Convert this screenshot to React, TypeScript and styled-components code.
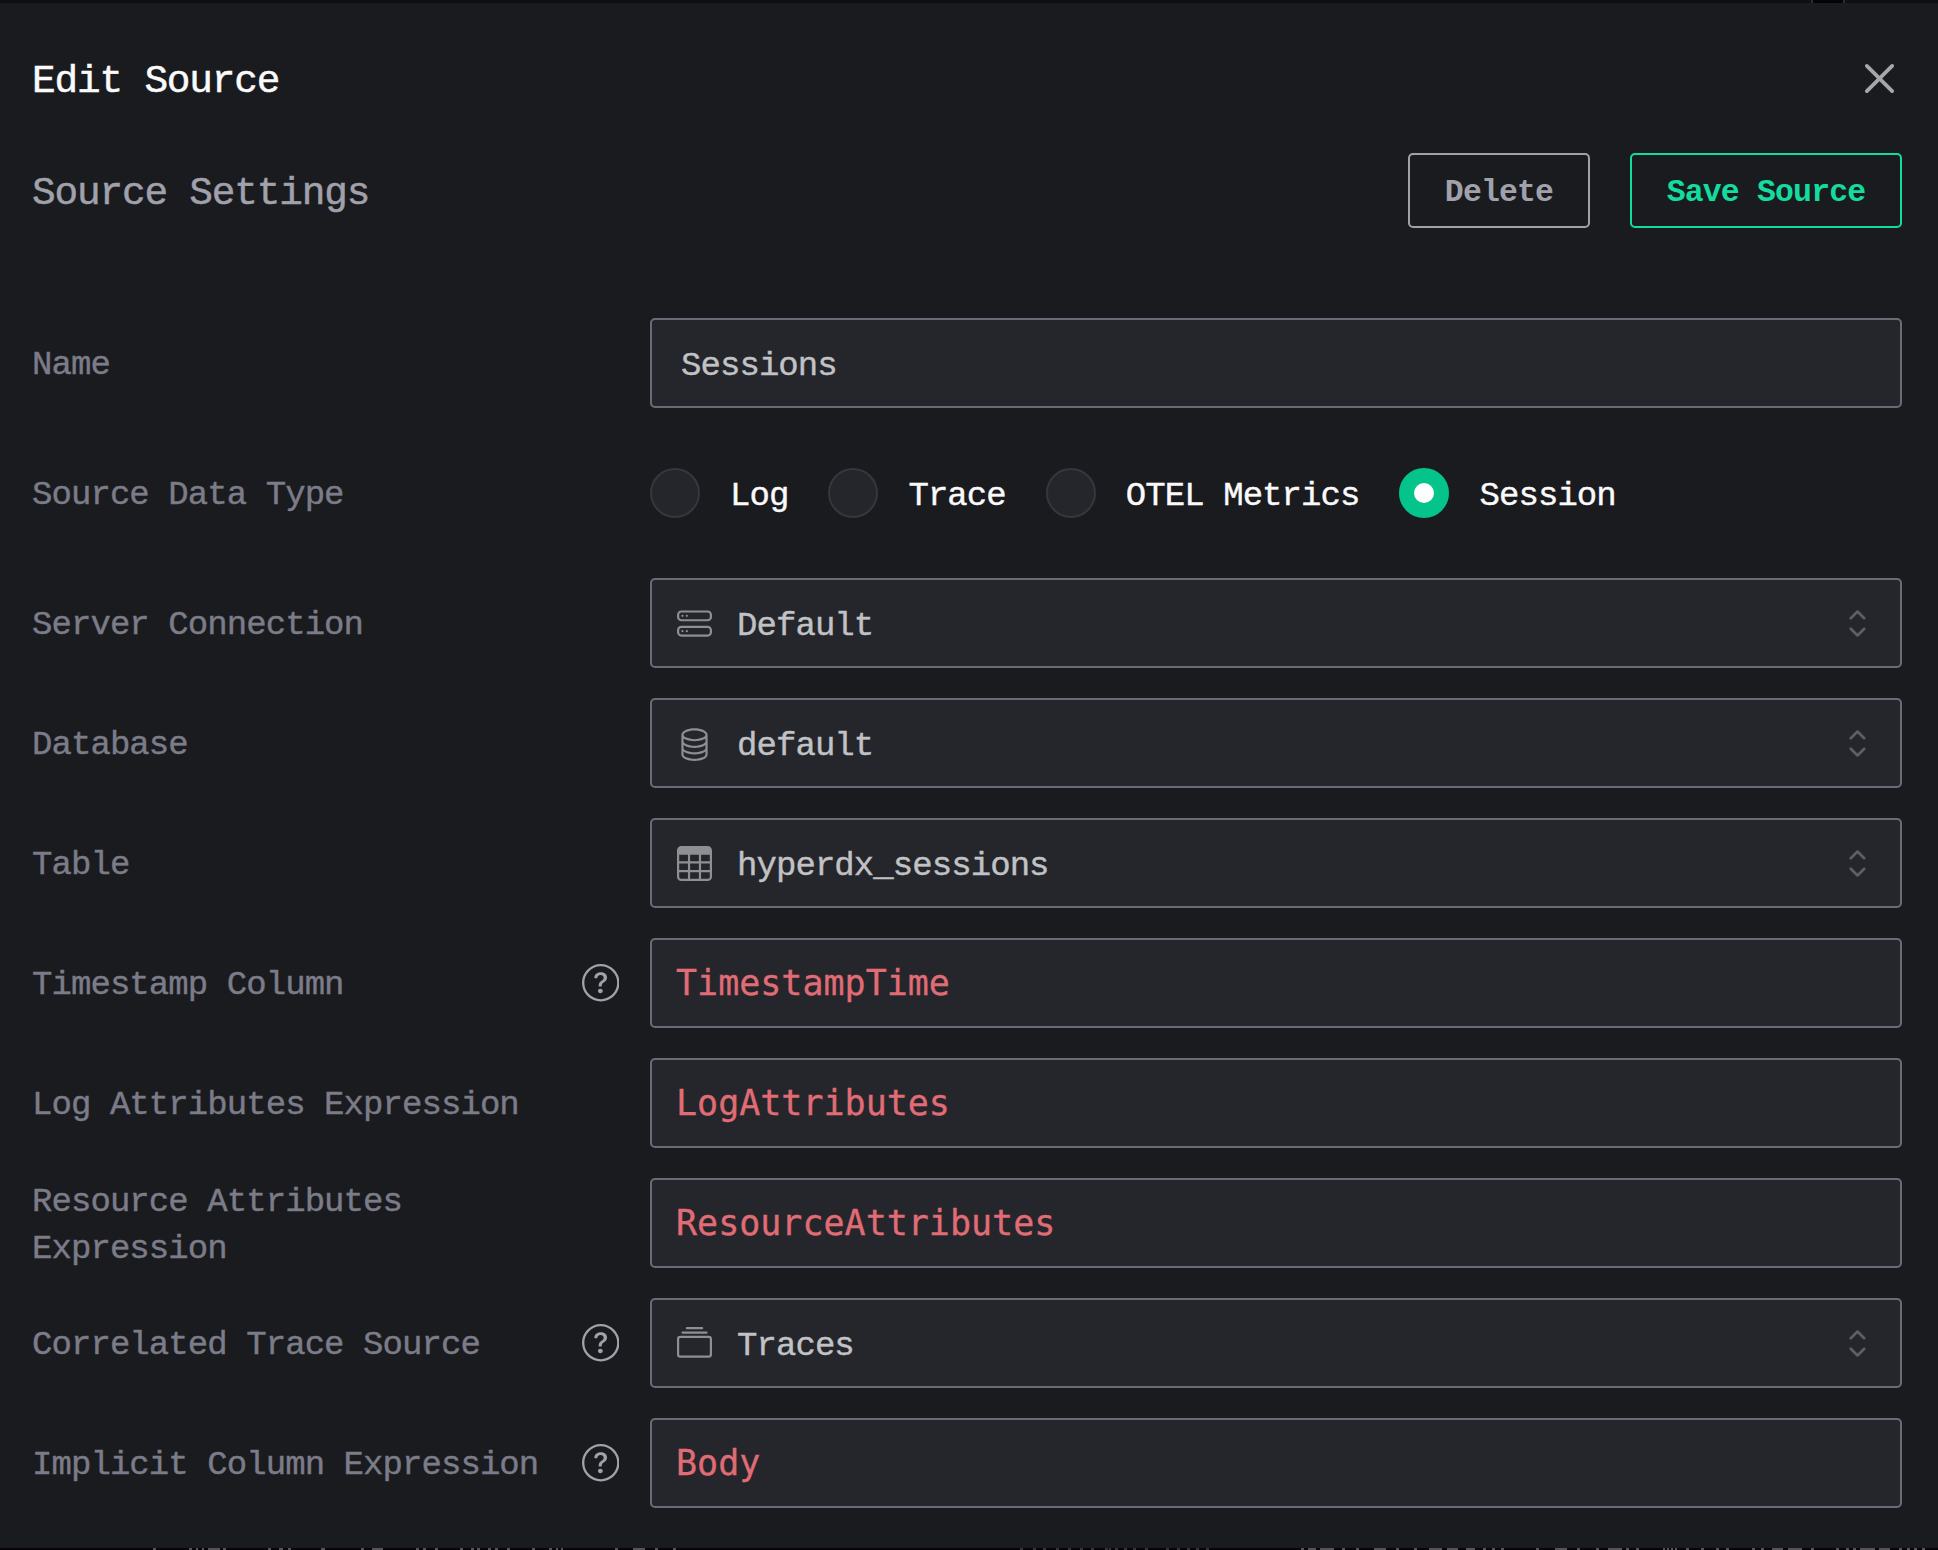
import React from 'react';
import styled, { createGlobalStyle } from 'styled-components';
import { BsHddStack, BsDatabase, BsTable, BsCollection, BsQuestionCircle } from 'react-icons/bs';

const GlobalStyle = createGlobalStyle`
  *, *::before, *::after { box-sizing: border-box; }
  body {
    margin: 0;
    background: #0f0f12;
    font-family: 'Liberation Mono', monospace;
    -webkit-font-smoothing: antialiased;
  }
  svg { display: block; flex: none; }
`;

const Page = styled.div`
  display: flex;
  flex-direction: column;
  height: 1550px;
  overflow: hidden;
`;

const TopStrip = styled.div`
  display: flex;
  justify-content: flex-end;
  flex: none;
  height: 3px;
  padding-right: 93px;
  background: #0f0f12;
`;

const TopNotch = styled.div`
  width: 34px;
  background: #040406;
  border: solid #2b2b30;
  border-width: 0 2px;
`;

const BottomStrip = styled.div`
  flex: none;
  height: 2px;
  background: #070508;
`;

const Modal = styled.main`
  flex: 1;
  min-height: 0;
  padding: 50px 36px 0 32px;
  background: #1a1b1f;
`;

const Bar = styled.header`
  display: flex;
  align-items: center;
  justify-content: space-between;
`;

const TitleBar = styled(Bar)`
  height: 51px;
`;

const SettingsBar = styled(Bar)`
  height: 75px;
  margin-top: 49px;
`;

const Heading = styled.h2<{ $muted?: boolean }>`
  margin: 0;
  padding-top: 6px;
  font-size: 39.4px;
  letter-spacing: -1.16px;
  font-weight: 400;
  line-height: 50px;
  color: ${p => (p.$muted ? '#a1a1ab' : '#fafafa')};
  -webkit-text-stroke: 0.5px currentColor;
`;

const CloseButton = styled.button`
  display: flex;
  margin-right: -2px;
  padding: 0;
  border: 0;
  background: none;
  color: #a6a6ab;
`;

const Actions = styled.div`
  display: flex;
  gap: 40px;
`;

const ActionButton = styled.button<{ $tone: string; $width: number }>`
  width: ${p => p.$width}px;
  height: 75px;
  padding: 5px 0 0;
  border: 2px solid ${p => p.$tone};
  border-radius: 5px;
  background: transparent;
  color: ${p => p.$tone};
  font: 700 31.5px/1 'Liberation Mono', monospace;
  letter-spacing: -0.85px;
`;

const Form = styled.div`
  display: flex;
  flex-direction: column;
  gap: 30px;
  margin-top: 90px;
`;

const Row = styled.div<{ $tall?: boolean }>`
  display: grid;
  grid-template-columns: 588px 1fr;
  grid-template-rows: 100%;
  column-gap: 30px;
  align-items: center;
  height: ${p => (p.$tall ? 110 : 90)}px;
`;

const LabelCell = styled.div`
  display: flex;
  align-items: center;
  justify-content: space-between;
  padding-right: 1px;
  color: #a1a1ab;
`;

const Label = styled.label`
  max-width: 550px;
  padding-top: 5px;
  font-size: 34px;
  letter-spacing: -0.93px;
  line-height: 47px;
  color: #7c7c89;
  -webkit-text-stroke: 0.4px currentColor;
`;

const Control = styled.div`
  display: flex;
  align-items: center;
  height: 90px;
  border: 2px solid #6b6b78;
  border-radius: 5px;
  background: #25262b;
  font-size: 34px;
  letter-spacing: -0.93px;
  color: #c1c2c5;
`;

const TextField = styled(Control)`
  padding: 5px 28px 0 29px;
  -webkit-text-stroke: 0.4px currentColor;
`;

const CodeField = styled(Control)`
  padding: 0 24px;
  font-family: 'DejaVu Sans Mono', monospace;
  font-size: 35px;
  letter-spacing: 0;
  color: #e06c75;
  -webkit-text-stroke: 0.3px currentColor;
`;

const SelectField = styled(Control)`
  padding: 0 20px 0 25px;
`;

const SelectIcon = styled.span`
  display: flex;
  margin-right: 25px;
  color: #8e8f92;
`;

const SelectValue = styled.span`
  flex: 1;
  padding-top: 5px;
  -webkit-text-stroke: 0.4px currentColor;
`;

const RadioGroup = styled.div`
  display: flex;
  align-items: center;
  gap: 40px;
`;

const RadioOption = styled.label`
  display: flex;
  align-items: center;
  gap: 30px;
  font-size: 34px;
  letter-spacing: -0.93px;
  color: #fafafa;
  -webkit-text-stroke: 0.4px currentColor;
`;

const RadioText = styled.span`
  padding-top: 5px;
`;

const RadioDot = styled.span<{ $on?: boolean }>`
  display: grid;
  place-items: center;
  width: 50px;
  height: 50px;
  border: 2px solid ${p => (p.$on ? '#05c48b' : '#36373e')};
  border-radius: 50%;
  background: ${p => (p.$on ? '#05c48b' : '#25262b')};

  &::after {
    content: '';
    width: 20px;
    height: 20px;
    border-radius: 50%;
    background: ${p => (p.$on ? '#fff' : 'transparent')};
  }
`;

const CloseIcon = () => (
  <svg width="49" height="49" viewBox="0 0 15 15" fill="currentColor">
    <path d="M11.7816 4.03157C12.0062 3.80702 12.0062 3.44295 11.7816 3.2184C11.5571 2.99385 11.193 2.99385 10.9685 3.2184L7.50005 6.68682L4.03164 3.2184C3.80708 2.99385 3.44301 2.99385 3.21846 3.2184C2.99391 3.44295 2.99391 3.80702 3.21846 4.03157L6.68688 7.49999L3.21846 10.9684C2.99391 11.193 2.99391 11.557 3.21846 11.7816C3.44301 12.0061 3.80708 12.0061 4.03164 11.7816L7.50005 8.31316L10.9685 11.7816C11.193 12.0061 11.5571 12.0061 11.7816 11.7816C12.0062 11.557 12.0062 11.193 11.7816 10.9684L8.31322 7.49999L11.7816 4.03157Z" />
  </svg>
);

const ChevronsIcon = () => (
  <svg width="45" height="45" viewBox="0 0 15 15" fill="#5c5f66">
    <path d="M4.93179 5.43179C4.75605 5.60753 4.75605 5.89245 4.93179 6.06819C5.10753 6.24392 5.39245 6.24392 5.56819 6.06819L7.49999 4.13638L9.43179 6.06819C9.60753 6.24392 9.89245 6.24392 10.0682 6.06819C10.2439 5.89245 10.2439 5.60753 10.0682 5.43179L7.81819 3.18179C7.73379 3.0974 7.61933 3.04999 7.49999 3.04999C7.38064 3.04999 7.26618 3.0974 7.18179 3.18179L4.93179 5.43179ZM10.0682 9.56819C10.2439 9.39245 10.2439 9.10753 10.0682 8.93179C9.89245 8.75606 9.60753 8.75606 9.43179 8.93179L7.49999 10.8636L5.56819 8.93179C5.39245 8.75606 5.10753 8.75606 4.93179 8.93179C4.75605 9.10753 4.75605 9.39245 4.93179 9.56819L7.18179 11.8182C7.35753 11.9939 7.64245 11.9939 7.81819 11.8182L10.0682 9.56819Z" />
  </svg>
);

// Slivers of the dimmed log rows that show below the modal, as [x, width].
const DIM_SLIVERS = [
  [1020, 3], [1033, 3], [1043, 3], [1056, 3], [1068, 3], [1080, 3], [1091, 3], [1105, 3], [1109, 2],
  [1115, 3], [1124, 3], [1133, 3], [1145, 3], [1166, 3], [1177, 3], [1187, 3], [1196, 3], [1206, 3],
];
const BRIGHT_SLIVERS = [
  [153, 3], [189, 3], [196, 2], [202, 2], [208, 12], [223, 3], [268, 3], [279, 4], [288, 3], [321, 4],
  [361, 3], [372, 11], [416, 3], [423, 3], [435, 3], [460, 3], [471, 3], [477, 3], [488, 3], [495, 3],
  [507, 3], [532, 3], [549, 3], [556, 2], [561, 2], [615, 3], [633, 12], [655, 3], [673, 3],
  [1301, 3], [1308, 8], [1320, 14], [1342, 3], [1356, 3], [1374, 12], [1396, 3], [1414, 3], [1429, 13],
  [1447, 11], [1466, 9], [1483, 3], [1492, 3], [1501, 3], [1536, 3], [1555, 12], [1577, 3], [1596, 3],
  [1608, 14], [1626, 3], [1636, 3], [1663, 2], [1667, 2], [1671, 2], [1675, 2], [1686, 3], [1701, 3],
  [1716, 3], [1726, 3], [1752, 3], [1761, 3], [1772, 11], [1788, 14], [1811, 3], [1836, 3], [1846, 3],
  [1853, 3], [1860, 15], [1879, 11], [1899, 3], [1907, 3], [1914, 3], [1922, 3],
];

const sliverPath = (slivers: number[][]) => slivers.map(([x, w]) => `M${x} 1h${w}`).join('');

const BackdropSlivers = () => (
  <svg width="1938" height="2" viewBox="0 0 1938 2" strokeWidth="2">
    <path d={sliverPath(DIM_SLIVERS)} stroke="#363438" />
    <path d={sliverPath(BRIGHT_SLIVERS)} stroke="#555355" />
  </svg>
);

type FieldProps = { label: string; help?: boolean; tall?: boolean; children: React.ReactNode };

const Field = ({ label, help, tall, children }: FieldProps) => (
  <Row $tall={tall}>
    <LabelCell>
      <Label>{label}</Label>
      {help && <BsQuestionCircle size={37.5} />}
    </LabelCell>
    {children}
  </Row>
);

const Select = ({ icon, value }: { icon: React.ReactNode; value: string }) => (
  <SelectField>
    <SelectIcon>{icon}</SelectIcon>
    <SelectValue>{value}</SelectValue>
    <ChevronsIcon />
  </SelectField>
);

const SOURCE_TYPES = ['Log', 'Trace', 'OTEL Metrics', 'Session'];

export default function App() {
  return (
    <Page>
      <GlobalStyle />
      <TopStrip>
        <TopNotch />
      </TopStrip>
      <Modal>
        <TitleBar>
          <Heading>Edit Source</Heading>
          <CloseButton aria-label="Close">
            <CloseIcon />
          </CloseButton>
        </TitleBar>
        <SettingsBar>
          <Heading $muted>Source Settings</Heading>
          <Actions>
            <ActionButton $tone="#a1a1ab" $width={182}>Delete</ActionButton>
            <ActionButton $tone="#12dd9f" $width={272}>Save Source</ActionButton>
          </Actions>
        </SettingsBar>
        <Form>
          <Field label="Name">
            <TextField>Sessions</TextField>
          </Field>
          <Field label="Source Data Type" tall>
            <RadioGroup>
              {SOURCE_TYPES.map(type => (
                <RadioOption key={type}>
                  <RadioDot $on={type === 'Session'} />
                  <RadioText>{type}</RadioText>
                </RadioOption>
              ))}
            </RadioGroup>
          </Field>
          <Field label="Server Connection">
            <Select icon={<BsHddStack size={35} />} value="Default" />
          </Field>
          <Field label="Database">
            <Select icon={<BsDatabase size={35} />} value="default" />
          </Field>
          <Field label="Table">
            <Select icon={<BsTable size={35} />} value="hyperdx_sessions" />
          </Field>
          <Field label="Timestamp Column" help>
            <CodeField>TimestampTime</CodeField>
          </Field>
          <Field label="Log Attributes Expression">
            <CodeField>LogAttributes</CodeField>
          </Field>
          <Field label="Resource Attributes Expression">
            <CodeField>ResourceAttributes</CodeField>
          </Field>
          <Field label="Correlated Trace Source" help>
            <Select icon={<BsCollection size={35} />} value="Traces" />
          </Field>
          <Field label="Implicit Column Expression" help>
            <CodeField>Body</CodeField>
          </Field>
        </Form>
      </Modal>
      <BottomStrip>
        <BackdropSlivers />
      </BottomStrip>
    </Page>
  );
}
